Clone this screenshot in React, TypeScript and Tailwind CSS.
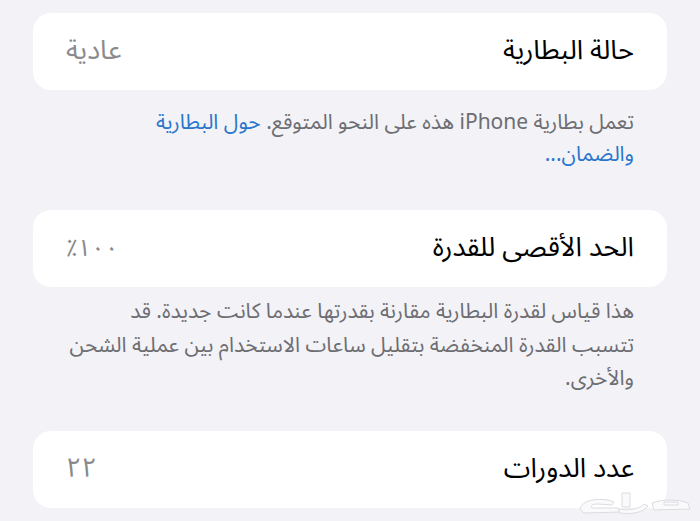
import React from "react";

type RowProps = {
  label: string;
  value: string;
  tight?: boolean;
};

function Row({ label, value, tight }: RowProps) {
  return (
    <div className="flex h-[77px] items-center justify-between rounded-[18px] bg-white px-[33px]">
      <span className="text-[27px] text-black">{label}</span>
      <span
        dir="ltr"
        className={
          tight
            ? "text-[24px] tracking-[-3px] text-[#8a8a8e]"
            : "text-[27px] text-[#8a8a8e]"
        }
      >
        {value}
      </span>
    </div>
  );
}

// faint site watermark, bottom-right corner
function Watermark() {
  return (
    <svg
      className="pointer-events-none absolute bottom-[4px] right-[8px]"
      width="114"
      height="30"
      viewBox="0 0 114 30"
      fill="none"
    >
      <g stroke="#dcdce1" strokeWidth="1" fill="#fafafc" strokeLinejoin="round">
        <path d="M2 22 C4 14 16 11 30 13 L36 15 L34 18 L20 17 C14 17 12 19 14 21 L40 21 L42 25 L6 26 Z" />
        <path d="M44 6 L52 6 L52 20 L44 20 Z" />
        <path d="M40 22 C50 24 62 22 66 17 L70 19 C66 25 54 28 42 26 Z" />
        <path d="M74 16 C84 12 100 12 110 16 L112 22 L76 23 Z" />
        <path d="M86 15 L100 15 L100 18 L86 18 Z" />
      </g>
    </svg>
  );
}

export default function App() {
  return (
    <div
      dir="rtl"
      className="relative h-[521px] w-[700px] overflow-hidden bg-[#f2f2f7] px-[33px] pt-[13px]"
      style={{ fontFamily: '"Noto Sans Arabic", "DejaVu Sans", sans-serif' }}
    >
      <Row label="حالة البطارية" value="عادية" />
      <p className="px-[33px] pt-[16px] text-[21px] leading-[32px] text-[#6d6d72]">
        تعمل بطارية iPhone هذه على النحو المتوقع.{" "}
        <span className="text-[#2a76cc]">
          حول البطارية
          <br />
          والضمان...
        </span>
      </p>

      <div className="pt-[40px]">
        <Row label="الحد الأقصى للقدرة" value="٪١٠٠" tight />
      </div>
      <p className="px-[33px] pt-[8px] text-[21px] leading-[33.5px] text-[#6d6d72]">
        هذا قياس لقدرة البطارية مقارنة بقدرتها عندما كانت جديدة. قد
        <br />
        تتسبب القدرة المنخفضة بتقليل ساعات الاستخدام بين عملية الشحن
        <br />
        والأخرى.
      </p>

      <div className="pt-[35px]">
        <Row label="عدد الدورات" value="٢٢" />
      </div>

      <Watermark />
    </div>
  );
}
